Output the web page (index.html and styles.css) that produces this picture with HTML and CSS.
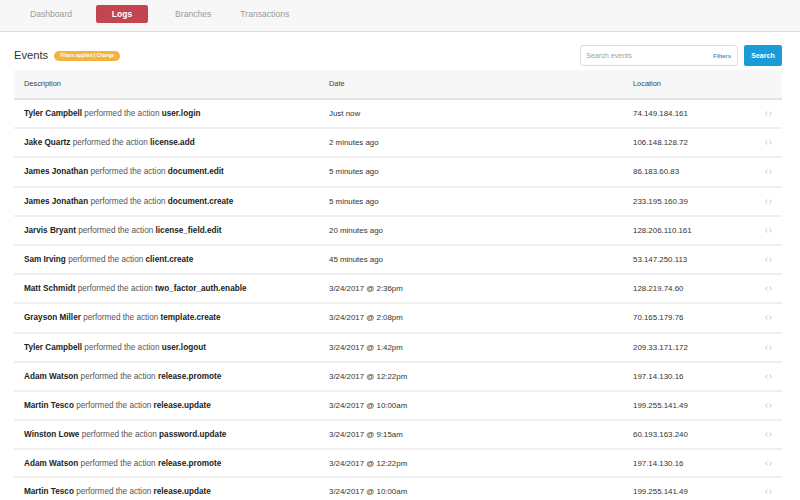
FILE: index.html
```html
<!DOCTYPE html>
<html>
<head>
<meta charset="utf-8">
<link rel="stylesheet" href="styles.css">
</head>
<body>
<nav class="nav">
  <a class="tab">Dashboard</a>
  <a class="tab active">Logs</a>
  <a class="tab wide">Branches</a>
  <a class="tab">Transactions</a>
</nav>
<main class="content">
  <div class="toolbar">
    <div class="title-wrap">
      <h1 class="title">Events</h1>
      <span class="badge">Filters applied | Change</span>
    </div>
    <div class="search-wrap">
      <div class="search-box">
        <span class="placeholder">Search events</span>
        <span class="filters">Filters</span>
      </div>
      <button class="search-btn">Search</button>
    </div>
  </div>
  <table class="events">
    <thead>
      <tr><th class="c-desc">Description</th><th class="c-date">Date</th><th class="c-loc">Location</th><th class="c-icon"></th></tr>
    </thead>
    <tbody id="rows">
      <tr><td><b>Tyler Campbell</b> performed the action <b>user.login</b></td><td>Just now</td><td>74.149.184.161</td><td class="c-icon"><svg class="code" viewBox="0 0 8 6"><path d="M2.6 0.6 L0.6 3 L2.6 5.4 M5.4 0.6 L7.4 3 L5.4 5.4"/></svg></td></tr>
      <tr><td><b>Jake Quartz</b> performed the action <b>license.add</b></td><td>2 minutes ago</td><td>106.148.128.72</td><td class="c-icon"><svg class="code" viewBox="0 0 8 6"><path d="M2.6 0.6 L0.6 3 L2.6 5.4 M5.4 0.6 L7.4 3 L5.4 5.4"/></svg></td></tr>
      <tr><td><b>James Jonathan</b> performed the action <b>document.edit</b></td><td>5 minutes ago</td><td>86.183.60.83</td><td class="c-icon"><svg class="code" viewBox="0 0 8 6"><path d="M2.6 0.6 L0.6 3 L2.6 5.4 M5.4 0.6 L7.4 3 L5.4 5.4"/></svg></td></tr>
      <tr><td><b>James Jonathan</b> performed the action <b>document.create</b></td><td>5 minutes ago</td><td>233.195.160.39</td><td class="c-icon"><svg class="code" viewBox="0 0 8 6"><path d="M2.6 0.6 L0.6 3 L2.6 5.4 M5.4 0.6 L7.4 3 L5.4 5.4"/></svg></td></tr>
      <tr><td><b>Jarvis Bryant</b> performed the action <b>license_field.edit</b></td><td>20 minutes ago</td><td>128.206.110.161</td><td class="c-icon"><svg class="code" viewBox="0 0 8 6"><path d="M2.6 0.6 L0.6 3 L2.6 5.4 M5.4 0.6 L7.4 3 L5.4 5.4"/></svg></td></tr>
      <tr><td><b>Sam Irving</b> performed the action <b>client.create</b></td><td>45 minutes ago</td><td>53.147.250.113</td><td class="c-icon"><svg class="code" viewBox="0 0 8 6"><path d="M2.6 0.6 L0.6 3 L2.6 5.4 M5.4 0.6 L7.4 3 L5.4 5.4"/></svg></td></tr>
      <tr><td><b>Matt Schmidt</b> performed the action <b>two_factor_auth.enable</b></td><td>3/24/2017 @ 2:36pm</td><td>128.219.74.60</td><td class="c-icon"><svg class="code" viewBox="0 0 8 6"><path d="M2.6 0.6 L0.6 3 L2.6 5.4 M5.4 0.6 L7.4 3 L5.4 5.4"/></svg></td></tr>
      <tr><td><b>Grayson Miller</b> performed the action <b>template.create</b></td><td>3/24/2017 @ 2:08pm</td><td>70.165.179.76</td><td class="c-icon"><svg class="code" viewBox="0 0 8 6"><path d="M2.6 0.6 L0.6 3 L2.6 5.4 M5.4 0.6 L7.4 3 L5.4 5.4"/></svg></td></tr>
      <tr><td><b>Tyler Campbell</b> performed the action <b>user.logout</b></td><td>3/24/2017 @ 1:42pm</td><td>209.33.171.172</td><td class="c-icon"><svg class="code" viewBox="0 0 8 6"><path d="M2.6 0.6 L0.6 3 L2.6 5.4 M5.4 0.6 L7.4 3 L5.4 5.4"/></svg></td></tr>
      <tr><td><b>Adam Watson</b> performed the action <b>release.promote</b></td><td>3/24/2017 @ 12:22pm</td><td>197.14.130.16</td><td class="c-icon"><svg class="code" viewBox="0 0 8 6"><path d="M2.6 0.6 L0.6 3 L2.6 5.4 M5.4 0.6 L7.4 3 L5.4 5.4"/></svg></td></tr>
      <tr><td><b>Martin Tesco</b> performed the action <b>release.update</b></td><td>3/24/2017 @ 10:00am</td><td>199.255.141.49</td><td class="c-icon"><svg class="code" viewBox="0 0 8 6"><path d="M2.6 0.6 L0.6 3 L2.6 5.4 M5.4 0.6 L7.4 3 L5.4 5.4"/></svg></td></tr>
      <tr><td><b>Winston Lowe</b> performed the action <b>password.update</b></td><td>3/24/2017 @ 9:15am</td><td>60.193.163.240</td><td class="c-icon"><svg class="code" viewBox="0 0 8 6"><path d="M2.6 0.6 L0.6 3 L2.6 5.4 M5.4 0.6 L7.4 3 L5.4 5.4"/></svg></td></tr>
      <tr class="short"><td><b>Adam Watson</b> performed the action <b>release.promote</b></td><td>3/24/2017 @ 12:22pm</td><td>197.14.130.16</td><td class="c-icon"><svg class="code" viewBox="0 0 8 6"><path d="M2.6 0.6 L0.6 3 L2.6 5.4 M5.4 0.6 L7.4 3 L5.4 5.4"/></svg></td></tr>
      <tr><td><b>Martin Tesco</b> performed the action <b>release.update</b></td><td>3/24/2017 @ 10:00am</td><td>199.255.141.49</td><td class="c-icon"><svg class="code" viewBox="0 0 8 6"><path d="M2.6 0.6 L0.6 3 L2.6 5.4 M5.4 0.6 L7.4 3 L5.4 5.4"/></svg></td></tr>
    </tbody>
  </table>
</main>
</body>
</html>
```
FILE: styles.css
```css
* { box-sizing: border-box; }
html, body {
  margin: 0;
  padding: 0;
  background: #ffffff;
  font-family: "Liberation Sans", Arial, Helvetica, sans-serif;
  color: #333;
  overflow: hidden;
}
.nav {
  height: 32px;
  background: #f7f7f7;
  border-bottom: 1px solid #dcdcdc;
  display: flex;
  align-items: center;
  padding-left: 30px;
  padding-bottom: 5px;
  padding-top: 1px;
}
.tab {
  font-size: 8.6px;
  color: #9a9a9a;
  margin-right: 24px;
}
.tab.active {
  background: #c24551;
  color: #fff;
  font-weight: bold;
  border-radius: 2px;
  width: 52px;
  height: 18px;
  display: flex;
  align-items: center;
  justify-content: center;
  margin-right: 27px;
}
.tab.wide { margin-right: 29px; }
.content {
  padding: 13px 18px 0 14px;
}
.toolbar {
  display: flex;
  justify-content: space-between;
  align-items: center;
  height: 21px;
  margin-bottom: 4px;
}
.title-wrap {
  display: flex;
  align-items: center;
}
.title {
  font-size: 11.2px;
  font-weight: normal;
  color: #333;
  margin: 0 6px 1px 0;
}
.badge {
  background: #f4b23f;
  color: #fff;
  font-size: 4.8px;
  font-weight: bold;
  height: 10px;
  width: 66px;
  border-radius: 5px;
  display: flex;
  align-items: center;
  justify-content: center;
}
.search-wrap {
  display: flex;
  align-items: stretch;
  height: 21px;
}
.search-box {
  width: 158px;
  border: 1px solid #dedede;
  border-radius: 3px;
  display: flex;
  align-items: center;
  justify-content: space-between;
  padding: 0 6px 0 5px;
  margin-right: 6px;
}
.placeholder {
  font-size: 7.2px;
  color: #9e9e9e;
}
.filters {
  font-size: 6px;
  color: #3b99d6;
  font-weight: bold;
}
.search-btn {
  width: 38px;
  background: #1b9cd8;
  color: #fff;
  border: 0;
  border-radius: 2px;
  font-family: inherit;
  font-size: 7px;
  font-weight: bold;
  padding: 0;
}
.events {
  width: 768px;
  border-collapse: collapse;
  table-layout: fixed;
}
.events th {
  background: #f7f7f7;
  height: 29px;
  text-align: left;
  font-weight: normal;
  font-size: 7.4px;
  color: #444;
  padding: 0 10px 2px;
  border-bottom: 2px solid #e3e3e3;
}
.c-desc { width: 305px; }
.c-date { width: 304px; }
.c-loc { width: 129px; }
.c-icon { width: 30px; }
.events td {
  height: 29.2px;
  padding: 0 10px;
  font-size: 7.9px;
  color: #333;
  border-bottom: 2px solid #efefef;
  white-space: nowrap;
}
.events td:first-child {
  font-size: 8.2px;
  color: #555;
}
.events td b {
  color: #222;
}
.events tr.short td { height: 27.5px; }
.events td.c-icon {
  padding: 0 0 0 13px;
}
.code {
  width: 7px;
  height: 5px;
  display: block;
  fill: none;
  stroke: #b3b3b3;
  stroke-width: 0.9;
}
```
